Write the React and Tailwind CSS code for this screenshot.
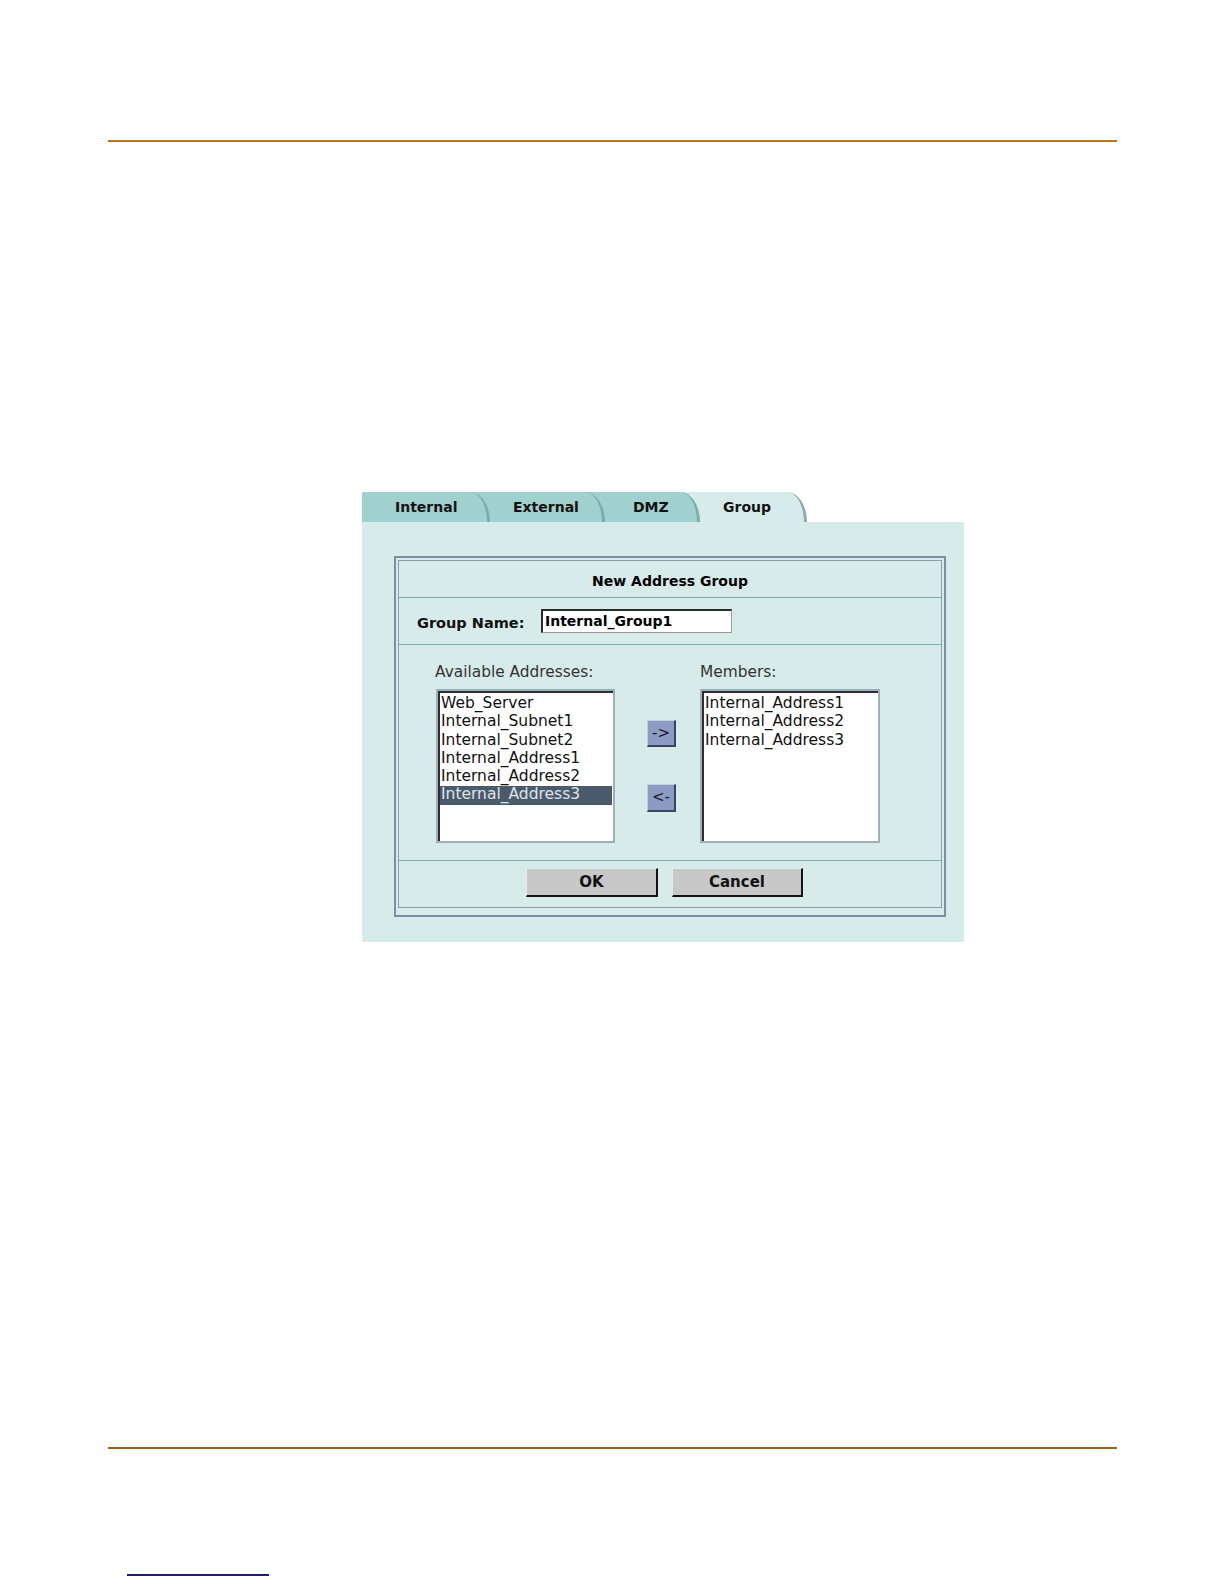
export default function App() {
  const avail = [
    "Web_Server",
    "Internal_Subnet1",
    "Internal_Subnet2",
    "Internal_Address1",
    "Internal_Address2",
    "Internal_Address3",
  ];
  const members = ["Internal_Address1", "Internal_Address2", "Internal_Address3"];
  return (
    <div className="w-[1224px] h-[1584px] bg-white font-['DejaVu_Sans',Verdana,sans-serif] text-black">
      <div className="pt-[140px] pl-[108px] pr-[107px]">
        <div className="h-[2px] bg-[#b8731c]" />
        <div className="mt-[350px] ml-[254px] w-[602px]">
          {/* Tabs */}
          <div className="flex h-[30px]">
            <div className="w-[128px] bg-[#a0d1ce]">
              <div className="h-[30px] bg-[#a0d1ce] rounded-tr-[20px_30px] border-r-[3px] border-[#78aeab] pl-[33px] flex items-center text-[14px] font-bold text-[#111]">
                Internal
              </div>
            </div>
            <div className="w-[115px] bg-[#a0d1ce]">
              <div className="h-[30px] bg-[#a0d1ce] rounded-tr-[20px_30px] border-r-[3px] border-[#78aeab] pl-[23px] flex items-center text-[14px] font-bold text-[#111]">
                External
              </div>
            </div>
            <div className="w-[95px] bg-[#d7ecea]">
              <div className="h-[30px] bg-[#a0d1ce] rounded-tr-[20px_30px] border-r-[3px] border-[#78aeab] pl-[28px] flex items-center text-[14px] font-bold text-[#111]">
                DMZ
              </div>
            </div>
            <div className="w-[107px] bg-white">
              <div className="h-[30px] bg-[#d7ecea] rounded-tr-[20px_30px] border-r-[3px] border-[#8fa8a8] pl-[23px] flex items-center text-[14px] font-bold text-[#111]">
                Group
              </div>
            </div>
          </div>
          {/* Panel */}
          <div className="h-[420px] bg-[#d7ecea] pt-[34px] pl-[32px]">
            <div className="w-[552px] border-2 border-[#7e8e9e] pt-[2px] px-[2px] pb-[7px]">
              <div className="border border-[#86a2a8] flex flex-col">
                <div className="h-[37px] border-b border-[#7aaeab] flex items-center justify-center pt-[5px] text-[14px] font-bold">
                  New Address Group
                </div>
                <div className="h-[47px] border-b border-[#7aaeab] flex items-center pl-[18px] pt-[2px]">
                  <div className="w-[124px] text-[14.5px] font-bold text-[#111] pt-[3px]">Group Name:</div>
                  <div className="w-[191px] h-[24px] -mt-[2px] bg-white border-t-2 border-l-2 border-[#2a2a2a] border-r border-b border-r-[#9a9a9a] border-b-[#9a9a9a] flex items-center pl-[2px] text-[14px] font-bold">
                    Internal_Group1
                  </div>
                </div>
                <div className="h-[216px] border-b border-[#7aaeab] flex pl-[37px] pt-[18px]">
                  <div className="w-[179px]">
                    <div className="h-[18px] leading-[18px] text-[15.4px] text-[#333] -ml-[1px]">Available Addresses:</div>
                    <div className="mt-[8px] h-[154px] border-2 border-[#a3aebd]">
                      <div className="h-full bg-white border-t-2 border-l-2 border-[#2e2e2e] pt-[2px] pr-[1px]">
                        {avail.map((a, i) => (
                          <div
                            key={a}
                            className={
                              i === 5
                                ? "h-[18.3px] leading-[17.5px] text-[15.5px] pl-[1px] bg-[#4b5a6a] text-[#dfe4ea]"
                                : "relative z-[1] h-[18.3px] leading-[17.5px] text-[15.5px] pl-[1px] text-[#111]"
                            }
                          >
                            {a}
                          </div>
                        ))}
                      </div>
                    </div>
                  </div>
                  <div className="ml-[32px] w-[29px] pt-[57px] flex flex-col gap-[37px]">
                    <div className="h-[27px] bg-[#8b9bc3] border-t border-l border-[#c3cbe0] border-r-2 border-b-2 border-r-[#3d4458] border-b-[#3d4458] flex items-center justify-center text-[15px] text-[#1a1a2a] leading-none">
                      -&gt;
                    </div>
                    <div className="h-[28px] bg-[#8b9bc3] border-t border-l border-[#c3cbe0] border-r-2 border-b-2 border-r-[#3d4458] border-b-[#3d4458] flex items-center justify-center text-[15px] text-[#1a1a2a] leading-none">
                      &lt;-
                    </div>
                  </div>
                  <div className="ml-[24px] w-[180px]">
                    <div className="h-[18px] leading-[18px] text-[15.4px] text-[#333]">Members:</div>
                    <div className="mt-[8px] h-[154px] border-2 border-[#a3aebd]">
                      <div className="h-full bg-white border-t-2 border-l-2 border-[#2e2e2e] pt-[2px] pl-[1px]">
                        {members.map((m) => (
                          <div key={m} className="h-[18.3px] leading-[17.5px] text-[15.5px] text-[#111]">
                            {m}
                          </div>
                        ))}
                      </div>
                    </div>
                  </div>
                </div>
                <div className="h-[46px] flex pl-[127px] pt-[7px] gap-[14px]">
                  <div className="w-[132px] h-[29px] bg-[#c8c8c8] border-t border-l border-[#e8e8e8] border-r-2 border-b-2 border-r-[#111] border-b-[#111] flex items-center justify-center text-[15px] font-bold text-[#111]">
                    OK
                  </div>
                  <div className="w-[131px] h-[29px] bg-[#c8c8c8] border-t border-l border-[#e8e8e8] border-r-2 border-b-2 border-r-[#111] border-b-[#111] flex items-center justify-center text-[15px] font-bold text-[#111]">
                    Cancel
                  </div>
                </div>
              </div>
            </div>
          </div>
        </div>
        <div className="mt-[505px] h-[2px] bg-[#9c6512]" />
        <div className="mt-[125px] ml-[19px] w-[142px] h-[2px] bg-[#1b1b8c]" />
      </div>
    </div>
  );
}
